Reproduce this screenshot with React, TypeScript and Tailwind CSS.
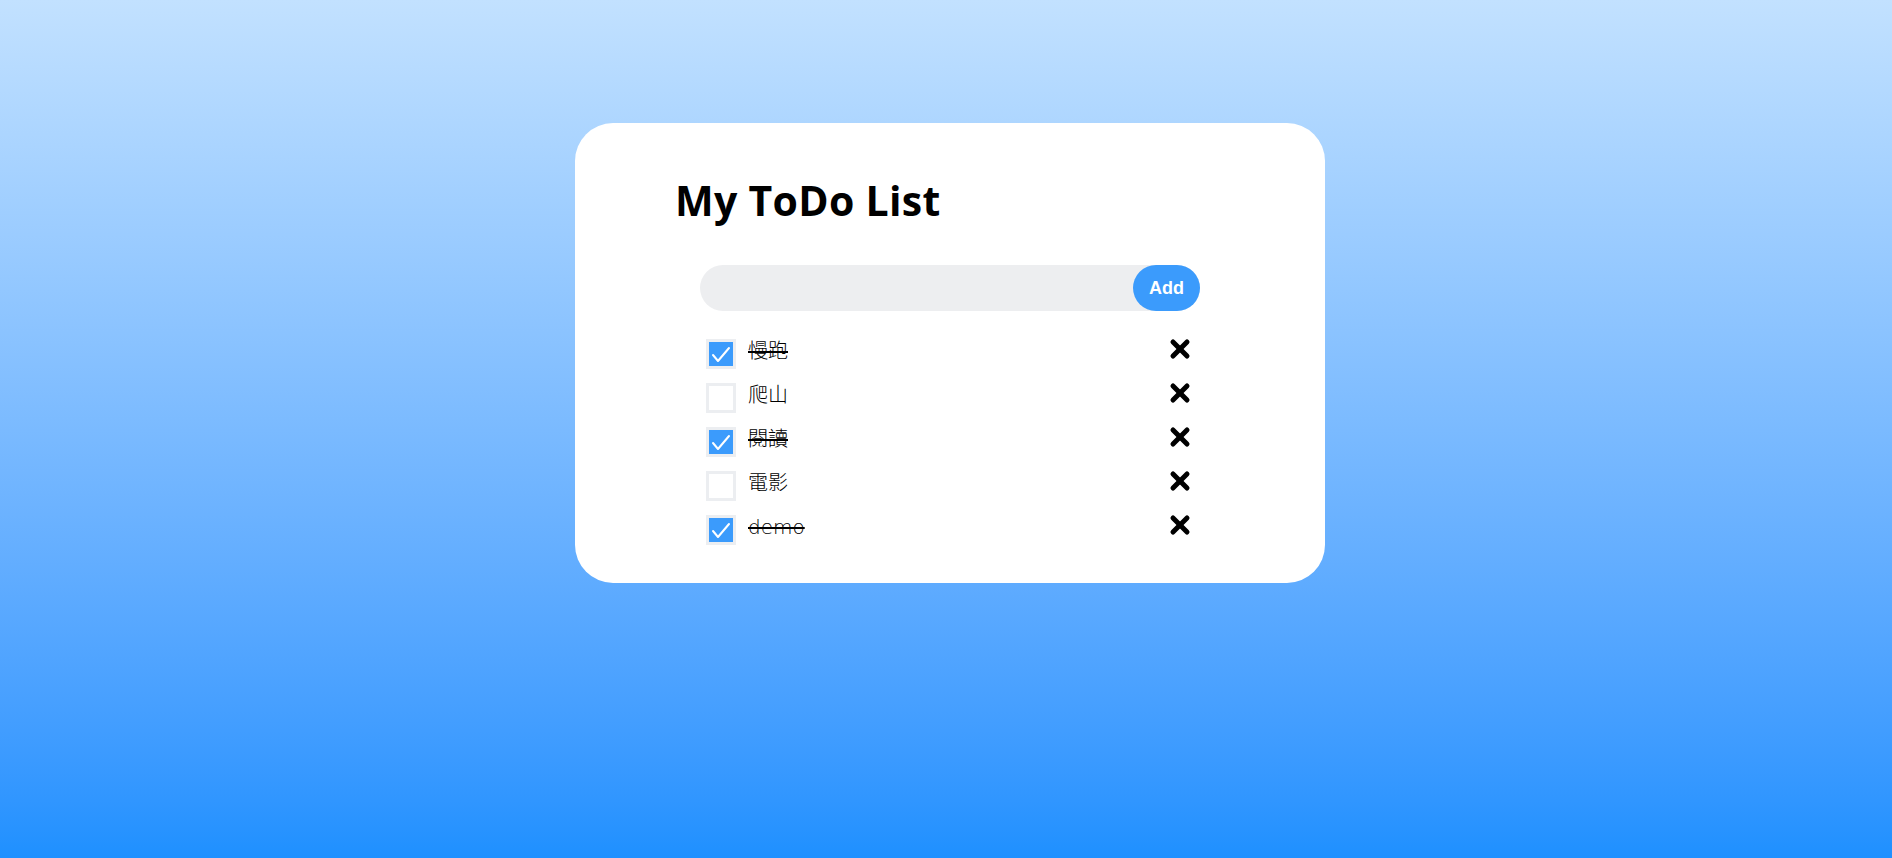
import { useState } from 'react';

interface Todo {
  id: number;
  text: string;
  done: boolean;
}

const initialTodos: Todo[] = [
  { id: 1, text: '慢跑', done: true },
  { id: 2, text: '爬山', done: false },
  { id: 3, text: '閱讀', done: true },
  { id: 4, text: '電影', done: false },
  { id: 5, text: 'demo', done: true },
];

export default function App() {
  const [todos, setTodos] = useState<Todo[]>(initialTodos);
  const [input, setInput] = useState('');

  const handleAdd = () => {
    if (!input.trim()) return;
    setTodos([...todos, { id: Date.now(), text: input.trim(), done: false }]);
    setInput('');
  };

  const toggle = (id: number) =>
    setTodos(todos.map((t) => (t.id === id ? { ...t, done: !t.done } : t)));

  const remove = (id: number) => setTodos(todos.filter((t) => t.id !== id));

  return (
    <div className="min-h-[858px] w-full bg-gradient-to-b from-[#c2e1ff] to-[#1e90ff] pt-[123px] pl-2 flex justify-center items-start">
      <div className="w-[750px] bg-white rounded-[38px] pt-[56px] pb-[31px] pl-[100px] pr-[125px]">
        {/* Header */}
        <h1 className="text-[41px] leading-[42px] font-bold text-black font-['Open_Sans',sans-serif] tracking-[0.3px]">
          My ToDo List
        </h1>

        {/* Input */}
        <div className="ml-[25px] mt-[44px] relative h-[46px]">
          <input
            value={input}
            onChange={(e) => setInput(e.target.value)}
            className="w-full h-full rounded-full bg-[#edeef0] outline-none px-5 text-[18px] font-['Liberation_Sans',sans-serif]"
          />
          <button
            onClick={handleAdd}
            className="absolute right-0 top-0 h-[46px] w-[67px] rounded-full bg-[#3b9bfc] text-white text-[18px] font-bold font-['Liberation_Sans',sans-serif]"
          >
            Add
          </button>
        </div>

        {/* List */}
        <ul className="ml-[25px] mt-[21px]">
          {todos.map((todo) => (
            <li key={todo.id} className="h-[44px] flex items-start">
              <button
                onClick={() => toggle(todo.id)}
                className="ml-[6px] mt-[7px] w-[30px] h-[30px] border-[3px] border-[#eceef1] flex-shrink-0 flex items-center justify-center"
              >
                {todo.done ? (
                  <span className="w-[24px] h-[24px] bg-[#3b9bfc] flex items-center justify-center">
                    <svg width="24" height="24" viewBox="0 0 24 24" fill="none">
                      <polyline points="4,13 9,19 20,6" stroke="white" strokeWidth="2" strokeLinecap="round" strokeLinejoin="round" />
                    </svg>
                  </span>
                ) : (
                  <span className="w-[24px] h-[24px] bg-white" />
                )}
              </button>
              <span
                className={`ml-[12px] mt-[5px] text-[20px] leading-[28px] font-light text-black font-['DejaVu_Sans','Noto_Sans_CJK_TC',sans-serif] ${
                  todo.done ? 'line-through' : ''
                }`}
              >
                {todo.text}
              </span>
              <button onClick={() => remove(todo.id)} className="ml-auto mr-[9px] mt-[6px]">
                <svg width="22" height="22" viewBox="0 0 22 22" fill="none">
                  <line x1="4" y1="4" x2="18" y2="18" stroke="black" strokeWidth="5" strokeLinecap="round" />
                  <line x1="18" y1="4" x2="4" y2="18" stroke="black" strokeWidth="5" strokeLinecap="round" />
                </svg>
              </button>
            </li>
          ))}
        </ul>
      </div>
    </div>
  );
}
